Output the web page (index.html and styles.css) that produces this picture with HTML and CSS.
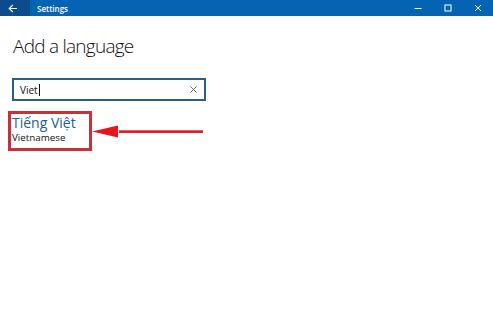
FILE: index.html
```html
<!DOCTYPE html>
<html>
<head>
<meta charset="utf-8">
<link rel="stylesheet" href="styles.css">
</head>
<body>
<div class="window">
  <div class="titlebar">
    <div class="back">
      <svg width="10" height="9" viewBox="0 0 10 9"><path d="M9 4.5H1.5M4.8 1L1.2 4.5L4.8 8" fill="none" stroke="#fff" stroke-width="1.1"/></svg>
    </div>
    <div class="title">Settings</div>
    <div class="controls">
      <div class="ctl"><svg width="8" height="8" viewBox="0 0 8 8"><path d="M0.5 4.5H7.5" stroke="#fff" stroke-width="1"/></svg></div>
      <div class="ctl"><svg width="8" height="8" viewBox="0 0 8 8"><rect x="1" y="1" width="6" height="6" fill="none" stroke="#fff" stroke-width="1"/></svg></div>
      <div class="ctl"><svg width="8" height="8" viewBox="0 0 8 8"><path d="M1 1L7 7M7 1L1 7" stroke="#fff" stroke-width="1"/></svg></div>
    </div>
  </div>
  <div class="content">
    <h1 class="heading">Add a language</h1>
    <div class="search">
      <span class="query">Viet</span><span class="caret"></span>
      <svg class="clear" width="7" height="7" viewBox="0 0 7 7"><path d="M0.5 0.5L6.5 6.5M6.5 0.5L0.5 6.5" stroke="#555" stroke-width="0.9"/></svg>
    </div>
    <div class="result">
      <div class="native">Tiếng Việt</div>
      <div class="english">Vietnamese</div>
      <div class="highlight"></div>
      <svg class="arrow" width="115" height="16" viewBox="0 0 115 16"><path d="M28 7.2H112V10H28Z" fill="#d3272b"/><path d="M1 8.5L27 2.5V14.5Z" fill="#e8141c"/></svg>
    </div>
  </div>
</div>
</body>
</html>
```
FILE: styles.css
```css
* { box-sizing: border-box; }
html, body { margin: 0; padding: 0; }
body {
  width: 493px;
  height: 323px;
  background: #fff;
  font-family: "Open Sans", "Noto Sans", sans-serif;
  overflow: hidden;
}
.window { display: flex; flex-direction: column; height: 100%; }
.titlebar {
  height: 16px;
  background: #0563b4;
  display: flex;
  align-items: center;
  color: #fff;
}
.back {
  width: 30px;
  height: 16px;
  background: #0a4c8e;
  display: flex;
  align-items: center;
  justify-content: center;
}
.back svg { margin-left: -4px; }
.title {
  font-size: 8px;
  margin-left: 7px;
  font-weight: 600;
}
.controls { margin-left: auto; display: flex; height: 16px; }
.ctl {
  width: 30px;
  display: flex;
  align-items: center;
  justify-content: center;
}
.content { padding: 0 12px; }
.heading {
  margin: 17px 0 0 1px;
  font-size: 19px;
  letter-spacing: -0.75px;
  font-weight: 300;
  color: #111;
  line-height: 27px;
}
.search {
  margin-top: 18px;
  width: 194px;
  height: 23px;
  border: 2px solid #2d5e84;
  display: flex;
  align-items: center;
  padding: 0 7px 0 6px;
  font-size: 10px;
  color: #111;
}
.caret { width: 1px; height: 12px; background: #111; margin-left: 1px; }
.clear { margin-left: auto; }
.result {
  position: relative;
  margin-top: 13px;
}
.native {
  font-size: 14px;
  color: #1d5e97;
  line-height: 18px;
}
.english {
  font-size: 9.8px;
  color: #111;
  line-height: 12px;
}
.highlight {
  position: absolute;
  left: -4px;
  top: -3px;
  width: 84px;
  height: 40px;
  border: 3px solid #c5323a;
}
.arrow {
  position: absolute;
  left: 79px;
  top: 9px;
}
```
